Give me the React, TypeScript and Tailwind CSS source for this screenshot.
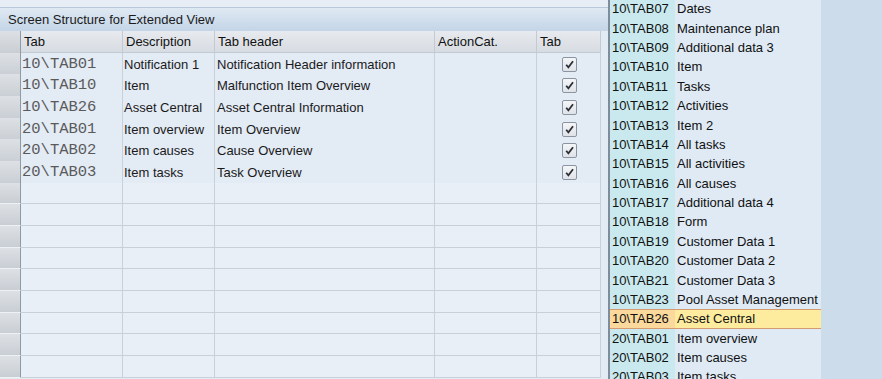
import React from 'react';

const rows = [
  { tab: '10\\TAB01', desc: 'Notification 1', header: 'Notification Header information' },
  { tab: '10\\TAB10', desc: 'Item', header: 'Malfunction Item Overview' },
  { tab: '10\\TAB26', desc: 'Asset Central', header: 'Asset Central Information' },
  { tab: '20\\TAB01', desc: 'Item overview', header: 'Item Overview' },
  { tab: '20\\TAB02', desc: 'Item causes', header: 'Cause Overview' },
  { tab: '20\\TAB03', desc: 'Item tasks', header: 'Task Overview' },
];

const options = [
  ['10\\TAB07', 'Dates'],
  ['10\\TAB08', 'Maintenance plan'],
  ['10\\TAB09', 'Additional data 3'],
  ['10\\TAB10', 'Item'],
  ['10\\TAB11', 'Tasks'],
  ['10\\TAB12', 'Activities'],
  ['10\\TAB13', 'Item 2'],
  ['10\\TAB14', 'All tasks'],
  ['10\\TAB15', 'All activities'],
  ['10\\TAB16', 'All causes'],
  ['10\\TAB17', 'Additional data 4'],
  ['10\\TAB18', 'Form'],
  ['10\\TAB19', 'Customer Data 1'],
  ['10\\TAB20', 'Customer Data 2'],
  ['10\\TAB21', 'Customer Data 3'],
  ['10\\TAB23', 'Pool Asset Management'],
  ['10\\TAB26', 'Asset Central'],
  ['20\\TAB01', 'Item overview'],
  ['20\\TAB02', 'Item causes'],
  ['20\\TAB03', 'Item tasks'],
];

const sans = "font-['Liberation_Sans','Arial',sans-serif]";
const cols = 'grid grid-cols-[21px_102px_92px_220px_102px_64px]';

const Check = () => (
  <div className="w-[15px] h-[15px] rounded-[2px] border border-[#8b95a1] bg-gradient-to-b from-[#f4f6f8] to-[#dfe3e8] flex items-center justify-center">
    <svg width="11" height="11" viewBox="0 0 10 10">
      <path d="M2 5.2 L4 7.6 L8.2 2" fill="none" stroke="#2a2f36" strokeWidth="1.6" />
    </svg>
  </div>
);

const Selector = () => (
  <div className="h-full border-r border-[#8e9aa8] border-b border-b-[#eef1f4] bg-gradient-to-b from-[#dde1e5] to-[#c9ced4]" />
);

export default function App() {
  const empty = Array.from({ length: 9 });
  return (
    <div className={`w-[882px] h-[379px] flex overflow-hidden bg-[#cddcea] text-[13px] ${sans}`}>
      {/* Table panel */}
      <div className="w-[608px] flex flex-col bg-[#e4ecf4]">
        <div className="h-[8px] shrink-0 bg-[#e6edf5] border-b border-[#b9c8d8]" />
        <div className="h-[23px] shrink-0 flex items-center px-[8px] text-[#1b1b1b] bg-gradient-to-b from-[#dfe9f3] to-[#c4d5e7]">
          Screen Structure for Extended View
        </div>
        <div className="flex flex-1 overflow-hidden">
          <div className="w-[601px] flex flex-col">
            {/* Header */}
            <div className={`${cols} h-[21.67px] shrink-0`}>
              <div className="border-r border-[#8e9aa8] bg-gradient-to-b from-[#dde1e5] to-[#c9ced4]" />
              {['Tab', 'Description', 'Tab header', 'ActionCat.', 'Tab'].map((h, i) => (
                <div
                  key={i}
                  className="flex items-center pl-[3px] border-r border-b border-[#c3cad3] bg-gradient-to-b from-[#e7eaee] to-[#d7dce2] text-[#111]"
                >
                  {h}
                </div>
              ))}
            </div>
            {/* Data rows */}
            {rows.map((r) => (
              <div key={r.tab} className={`${cols} h-[21.67px] shrink-0`}>
                <Selector />
                <div className="flex items-center pl-[1px] border-r border-b border-[#c8d0da] bg-[#e3ebf5] font-['Liberation_Mono',monospace] text-[15.5px] text-[#5a5a5a]">
                  {r.tab}
                </div>
                <div className="flex items-center pl-[1px] border-r border-b border-[#c8d0da] bg-[#e3ebf5] text-[#1a1a1a] whitespace-nowrap">
                  {r.desc}
                </div>
                <div className="flex items-center pl-[2px] border-r border-b border-[#c8d0da] bg-[#e3ebf5] text-[#1a1a1a] whitespace-nowrap">
                  {r.header}
                </div>
                <div className="border-r border-b border-[#c8d0da] bg-[#e3ebf5]" />
                <div className="flex items-center justify-end pr-[23px] border-r border-b border-[#c8d0da] bg-[#e3ebf5]">
                  <Check />
                </div>
              </div>
            ))}
            {/* Empty rows */}
            {empty.map((_, i) => (
              <div key={i} className={`${cols} h-[21.67px] shrink-0`}>
                <Selector />
                <div className="border-r border-b border-[#c8d0da] bg-[#e9eff6]" />
                <div className="border-r border-b border-[#c8d0da] bg-[#e9eff6]" />
                <div className="border-r border-b border-[#c8d0da] bg-[#e9eff6]" />
                <div className="border-r border-b border-[#c8d0da] bg-[#e9eff6]" />
                <div className="border-r border-b border-[#c8d0da] bg-[#e9eff6]" />
              </div>
            ))}
          </div>
          <div className="flex-1 bg-[#e2eaf3]" />
        </div>
      </div>

      {/* Dropdown list */}
      <div className="w-[213px] shrink-0 border-l-2 border-[#7f8c9b] bg-[#dfeaf5] flex flex-col -mt-[0.6px]">
        {options.map(([k, v]) => {
          const sel = k === '10\\TAB26';
          return (
            <div
              key={k}
              className={`flex h-[19.39px] shrink-0 items-center whitespace-nowrap text-[#111] ${
                sel ? 'border-y border-[#d49a70]' : ''
              }`}
            >
              <div className={`w-[65px] h-full flex items-center pl-[2px] ${sel ? 'bg-[#fbd89c]' : 'bg-[#c9e9ee]'}`}>
                {k}
              </div>
              <div className={`flex-1 h-full flex items-center pl-[2px] ${sel ? 'bg-[#fdec9e]' : ''}`}>{v}</div>
            </div>
          );
        })}
      </div>
      <div className="flex-1 bg-[#cddcea]" />
    </div>
  );
}
